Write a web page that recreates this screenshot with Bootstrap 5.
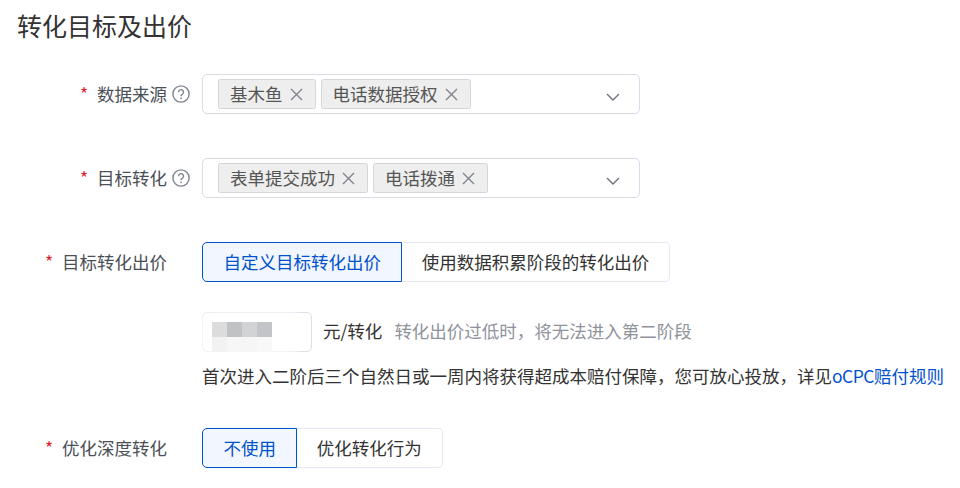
<!DOCTYPE html>
<html lang="zh">
<head>
<meta charset="utf-8">
<link href="https://cdn.jsdelivr.net/npm/bootstrap@5.3.0/dist/css/bootstrap.min.css" rel="stylesheet">
<style>
html,body{margin:0;background:#fff;}
body{font-family:"Noto Sans CJK SC","Liberation Sans",sans-serif;font-size:17.5px;line-height:25px;color:#333;height:488px;overflow:hidden;}
.pg{padding:0 0 0 17px;}
.ttl{font-size:25px;line-height:32px;font-weight:400;color:#333;margin:0;padding-top:9px;height:74px;}
.frow-sel{height:40px;margin-bottom:44px;}
.frow-rad{height:40px;}
.lbl{width:150px;flex:none;color:#4b4f57;padding-bottom:2px;}
.star{color:#e0201c;margin-right:10px;width:7px;}
.aft{width:35px;flex:none;padding-left:5px;}
.sel{width:438px;height:40px;border:1.25px solid #d8dce8;border-radius:5px;padding-left:15px;position:relative;gap:5px;}
.tg{height:30px;background:#eee;border:1.25px solid #d6d6d6;border-radius:2.5px;padding:0 12px 2px 11px;color:#555;gap:7px;}
.tg svg{margin-top:2px;}
.chev{position:absolute;right:19px;top:18px;}
.rg .rb.btn{height:40px;padding:0 20px 2px 21.25px;margin:0;border:1.25px solid #e4e7f2;border-left-width:0;border-radius:0;color:#333;background:#fff;font-size:17.5px;line-height:25px;display:flex;align-items:center;}
.rg .rb.btn:last-child{border-radius:0 5px 5px 0;}
.rg .rb.btn.on{color:#0052cc;border:1.25px solid #0052cc;background:#f2f6fe;border-radius:5px 0 0 5px;padding:0 19.5px 2px 20.5px;z-index:1;}
.sub{margin-left:185px;}
.bidrow{margin-top:30px;height:40px;}
.inp{width:110px;height:40px;border:1.25px solid #dcdfe8;border-radius:5px;position:relative;margin-right:11px;flex:none;}
.veil{position:absolute;left:-5px;top:-3px;width:104px;height:46px;background:rgba(255,255,255,.7);filter:blur(3px);border-radius:14px;}
.mos{position:absolute;left:9px;top:9px;display:grid;grid-template-columns:repeat(4,15px);grid-auto-rows:15px;}
.bk1{background:#dcdcdc}.bk2{background:#c1c2c5}.bk3{background:#d2d3d5}.bk4{background:#c3c4c8}
.bk5{background:#f2f2f2}.bk6{background:#f7f7f7}.bk7{background:#f6f6f6}.bk8{background:#f8f8f8}
.unit{padding-bottom:3px;}
.tip{color:#8f939c;margin-left:12px;padding-bottom:3px;}
.note{margin-top:11px;height:25px;white-space:nowrap;}
.note a{color:#0052cc;text-decoration:none;}
.lat{letter-spacing:-.5px;}
.last{margin-top:40px;}
</style>
</head>
<body>
<div class="pg">
  <h1 class="ttl">转化目标及出价</h1>
  <div class="frow-sel d-flex align-items-center">
    <div class="lbl d-flex justify-content-end align-items-center"><span class="star">*</span><span>数据来源</span></div>
    <div class="aft d-flex align-items-center"><svg width="18" height="18" viewBox="0 0 18 18"><circle cx="9" cy="9" r="8.1" fill="none" stroke="#80848e" stroke-width="1.4"/><path d="M6.5 7.2a2.5 2.5 0 1 1 3.8 2.1c-.9.5-1.3.9-1.3 1.9" fill="none" stroke="#80848e" stroke-width="1.4"/><circle cx="9" cy="13.3" r=".9" fill="#80848e"/></svg></div>
    <div class="sel d-flex align-items-center">
      <span class="tg d-flex align-items-center">基木鱼<svg width="13" height="13" viewBox="0 0 13 13"><path d="M1 1l11 11M12 1L1 12" stroke="#80848e" stroke-width="1.4" fill="none"/></svg></span>
      <span class="tg d-flex align-items-center">电话数据授权<svg width="13" height="13" viewBox="0 0 13 13"><path d="M1 1l11 11M12 1L1 12" stroke="#80848e" stroke-width="1.4" fill="none"/></svg></span>
      <svg class="chev" width="14" height="8" viewBox="0 0 14 8"><path d="M1 1l6 6 6-6" stroke="#6d717b" stroke-width="1.4" fill="none"/></svg>
    </div>
  </div>
  <div class="frow-sel d-flex align-items-center">
    <div class="lbl d-flex justify-content-end align-items-center"><span class="star">*</span><span>目标转化</span></div>
    <div class="aft d-flex align-items-center"><svg width="18" height="18" viewBox="0 0 18 18"><circle cx="9" cy="9" r="8.1" fill="none" stroke="#80848e" stroke-width="1.4"/><path d="M6.5 7.2a2.5 2.5 0 1 1 3.8 2.1c-.9.5-1.3.9-1.3 1.9" fill="none" stroke="#80848e" stroke-width="1.4"/><circle cx="9" cy="13.3" r=".9" fill="#80848e"/></svg></div>
    <div class="sel d-flex align-items-center">
      <span class="tg d-flex align-items-center">表单提交成功<svg width="13" height="13" viewBox="0 0 13 13"><path d="M1 1l11 11M12 1L1 12" stroke="#80848e" stroke-width="1.4" fill="none"/></svg></span>
      <span class="tg d-flex align-items-center">电话拨通<svg width="13" height="13" viewBox="0 0 13 13"><path d="M1 1l11 11M12 1L1 12" stroke="#80848e" stroke-width="1.4" fill="none"/></svg></span>
      <svg class="chev" width="14" height="8" viewBox="0 0 14 8"><path d="M1 1l6 6 6-6" stroke="#6d717b" stroke-width="1.4" fill="none"/></svg>
    </div>
  </div>
  <div class="frow-rad d-flex align-items-center">
    <div class="lbl d-flex justify-content-end align-items-center"><span class="star">*</span><span>目标转化出价</span></div>
    <div class="aft"></div>
    <div class="rg btn-group">
      <button type="button" class="rb btn on">自定义目标转化出价</button>
      <button type="button" class="rb btn">使用数据积累阶段的转化出价</button>
    </div>
  </div>
  <div class="sub">
    <div class="bidrow d-flex align-items-center">
      <div class="inp"><div class="veil"></div><div class="mos">
        <i class="bk1"></i><i class="bk2"></i><i class="bk3"></i><i class="bk4"></i>
        <i class="bk5"></i><i class="bk6"></i><i class="bk7"></i><i class="bk8"></i>
      </div></div>
      <span class="unit">元/转化</span><span class="tip">转化出价过低时，将无法进入第二阶段</span>
    </div>
    <div class="note">首次进入二阶后三个自然日或一周内将获得超成本赔付保障，您可放心投放，详见<a href="#"><span class="lat">oCPC</span>赔付规则</a></div>
  </div>
  <div class="frow-rad last d-flex align-items-center">
    <div class="lbl d-flex justify-content-end align-items-center"><span class="star">*</span><span>优化深度转化</span></div>
    <div class="aft"></div>
    <div class="rg btn-group">
      <button type="button" class="rb btn on">不使用</button>
      <button type="button" class="rb btn">优化转化行为</button>
    </div>
  </div>
</div>
<script src="https://cdn.jsdelivr.net/npm/bootstrap@5.3.0/dist/js/bootstrap.bundle.min.js"></script>
</body>
</html>
